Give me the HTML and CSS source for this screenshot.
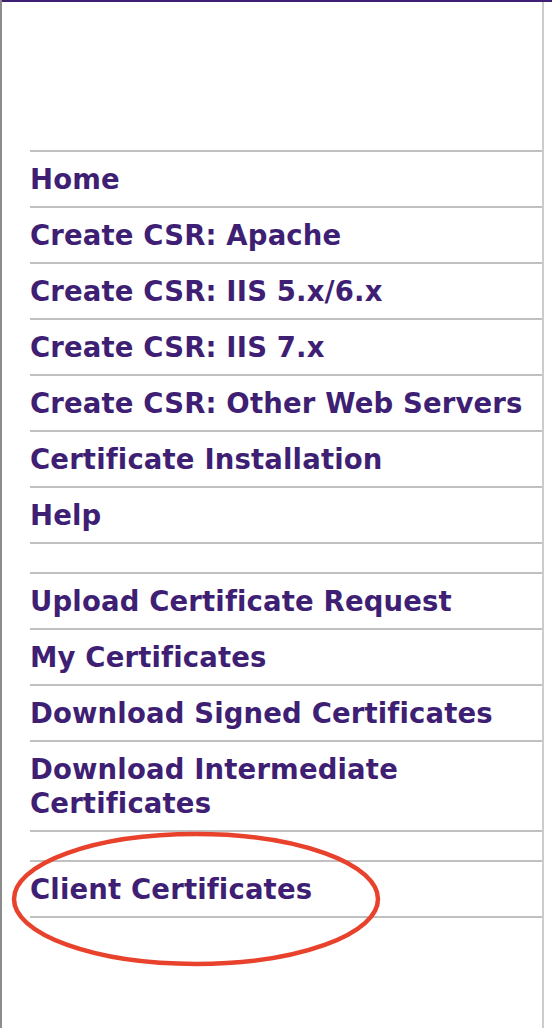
FILE: index.html
```html
<!DOCTYPE html>
<html>
<head>
<meta charset="utf-8">
<link rel="stylesheet" href="styles.css">
</head>
<body>
<div class="frame">
  <div class="inner">
    <nav class="sidebar">
      <ul class="menu">
        <li class="item"><a href="#">Home</a></li>
        <li class="item"><a href="#">Create CSR: Apache</a></li>
        <li class="item"><a href="#">Create CSR: IIS 5.x/6.x</a></li>
        <li class="item"><a href="#">Create CSR: IIS 7.x</a></li>
        <li class="item"><a href="#">Create CSR: Other Web Servers</a></li>
        <li class="item"><a href="#">Certificate Installation</a></li>
        <li class="item"><a href="#">Help</a></li>
        <li class="spacer"></li>
        <li class="item"><a href="#">Upload Certificate Request</a></li>
        <li class="item"><a href="#">My Certificates</a></li>
        <li class="item"><a href="#">Download Signed Certificates</a></li>
        <li class="item"><a href="#">Download Intermediate Certificates</a></li>
        <li class="spacer"></li>
        <li class="item highlighted"><a href="#">Client Certificates</a>
          <svg class="circle" width="380" height="144" viewBox="0 0 380 144" aria-hidden="true">
            <ellipse cx="190" cy="72" rx="182" ry="65" fill="none" stroke="#e8412c" stroke-width="4.5"/>
          </svg>
        </li>
      </ul>
    </nav>
  </div>
</div>
</body>
</html>
```

FILE: styles.css
```css
html, body {
  margin: 0;
  padding: 0;
  background: #ffffff;
}

.frame {
  border-left: 2px solid #8c8c8c;
  min-height: 1028px;
  box-sizing: border-box;
}

.inner {
  border-top: 2px solid #3e1f74;
  min-height: 1026px;
  width: 550px;
}

.sidebar {
  width: 542px;
  min-height: 1026px;
  border-right: 2px solid #cccccc;
  padding: 148px 0 0 28px;
  box-sizing: border-box;
}

.menu {
  list-style: none;
  margin: 0;
  padding: 0;
  border-bottom: 2px solid #c0c0c0;
}

.item {
  border-top: 2px solid #c0c0c0;
  padding: 10px 0;
  font-family: "DejaVu Sans", Verdana, sans-serif;
  font-weight: bold;
  font-size: 27.5px;
  line-height: 34px;
  letter-spacing: 0.15px;
}

.item a {
  color: #3e1f74;
  text-decoration: none;
  display: block;
}

.spacer {
  border-top: 2px solid #c0c0c0;
  height: 28px;
}

.highlighted {
  position: relative;
}

.circle {
  position: absolute;
  left: -24px;
  top: -35px;
  pointer-events: none;
}
```
